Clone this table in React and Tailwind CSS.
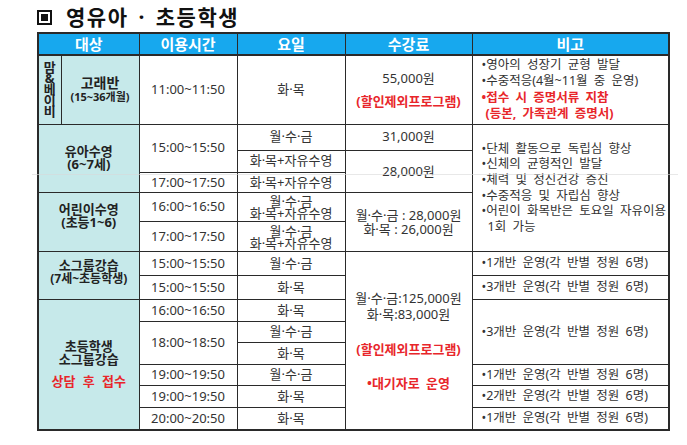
const Td = ({ children, className = "", ...rest }) => (
  <td
    className={`border border-[#2a2a2a] p-0 text-center align-middle ${className}`}
    {...rest}
  >
    {children}
  </td>
);

const Th = ({ children, ...rest }) => (
  <th
    className="border border-[#2a2a2a] border-b-2 bg-[#17a8ee] p-0 text-center align-middle text-[15px] font-bold leading-none text-white"
    {...rest}
  >
    {children}
  </th>
);

const cyan = "bg-[#c6e9ea] font-bold text-[#222] text-[13px] leading-[13px]";
const note = "text-left pl-[9px] text-[12.5px] text-[#333] [word-spacing:3px]";

const Red = ({ children, className = "" }) => (
  <span className={`font-bold text-[#e8262b] ${className}`}>{children}</span>
);

export default function App() {
  return (
    <div className="relative h-[445px] w-[687px] overflow-hidden bg-white font-['Noto_Sans','Noto_Sans_CJK_KR',sans-serif] text-[13px] text-[#333]">
      <div className="flex h-[32px] items-center gap-[14px] pl-[37px] pt-[3px]">
        <span className="flex h-[15px] w-[15px] items-center justify-center border-2 border-[#111]">
          <span className="h-[7px] w-[7px] bg-[#111]" />
        </span>
        <h1 className="text-[21px] font-bold leading-none tracking-[1.5px] text-[#111] [word-spacing:3px]">
          영유아 · 초등학생
        </h1>
      </div>

      <table className="ml-[37px] w-[631px] table-fixed border-collapse border-2 border-[#2a2a2a]">
        <colgroup>
          <col className="w-[23px]" />
          <col className="w-[78px]" />
          <col className="w-[98px]" />
          <col className="w-[108px]" />
          <col className="w-[127px]" />
          <col className="w-[197px]" />
        </colgroup>
        <thead>
          <tr className="h-[22px]">
            <Th colSpan={2}>대상</Th>
            <Th>이용시간</Th>
            <Th>요일</Th>
            <Th>수강료</Th>
            <Th>비고</Th>
          </tr>
        </thead>
        <tbody>
          <tr className="h-[69px]">
            <Td className={`${cyan} text-[10px]`}>
              <div className="flex flex-col items-center leading-[11px]">
                <span className="h-[11px]">맘</span>
                <span className="h-[11px]">&amp;</span>
                <span className="h-[11px]">베</span>
                <span className="h-[11px]">이</span>
                <span className="h-[11px]">비</span>
              </div>
            </Td>
            <Td className={cyan}>
              <div className="text-[14px] leading-[14px]">고래반</div>
              <div className="text-[11px] leading-[13px]">(15~36개월)</div>
            </Td>
            <Td>11:00~11:50</Td>
            <Td>화·목</Td>
            <Td>
              <div className="leading-[16px]">55,000원</div>
              <div className="mt-[7px] leading-[16px]">
                <Red>(할인제외프로그램)</Red>
              </div>
            </Td>
            <Td className={`${note} leading-[16.5px]`}>
              <div>•영아의 성장기 균형 발달</div>
              <div>•수중적응(4월~11월 중 운영)</div>
              <div>
                <Red>•접수 시 증명서류 지참</Red>
              </div>
              <div className="pl-[4px]">
                <Red>(등본, 가족관계 증명서)</Red>
              </div>
            </Td>
          </tr>

          <tr className="h-[26px]">
            <Td colSpan={2} rowSpan={3} className={cyan}>
              <div>유아수영</div>
              <div>(6~7세)</div>
            </Td>
            <Td rowSpan={2}>15:00~15:50</Td>
            <Td>월·수·금</Td>
            <Td>31,000원</Td>
            <Td rowSpan={5} className={`${note} leading-[15.7px]`}>
              <div>•단체 활동으로 독립심 향상</div>
              <div>•신체의 균형적인 발달</div>
              <div>•체력 및 정신건강 증진</div>
              <div>•수중적응 및 자립심 향상</div>
              <div>•어린이 화목반은 토요일 자유이용</div>
              <div className="pl-[6px]">1회 가능</div>
            </Td>
          </tr>
          <tr className="h-[22px]">
            <Td>화·목+자유수영</Td>
            <Td rowSpan={2}>28,000원</Td>
          </tr>
          <tr className="h-[20px]">
            <Td>17:00~17:50</Td>
            <Td>화·목+자유수영</Td>
          </tr>

          <tr className="h-[29px]">
            <Td colSpan={2} rowSpan={2} className={cyan}>
              <div className="pb-[12px]">
                <div>어린이수영</div>
                <div>(초등1~6)</div>
              </div>
            </Td>
            <Td>16:00~16:50</Td>
            <Td className="leading-[12px]">
              <div>월·수·금</div>
              <div>화·목+자유수영</div>
            </Td>
            <Td rowSpan={2} className="leading-[14px]">
              <div>월·수·금 : 28,000원</div>
              <div>화·목 : 26,000원</div>
            </Td>
          </tr>
          <tr className="h-[30px]">
            <Td>17:00~17:50</Td>
            <Td className="leading-[12px]">
              <div>월·수·금</div>
              <div>화·목+자유수영</div>
            </Td>
          </tr>

          <tr className="h-[24px]">
            <Td colSpan={2} rowSpan={2} className={cyan}>
              <div className="pb-[8px]">
                <div>소그룹강습</div>
                <div className="text-[12px]">(7세~초등학생)</div>
              </div>
            </Td>
            <Td>15:00~15:50</Td>
            <Td>월·수·금</Td>
            <Td rowSpan={8}>
              <div className="leading-[16px]">월·수·금:125,000원</div>
              <div className="leading-[16px]">화·목:83,000원</div>
              <div className="mt-[19px] leading-[16px]">
                <Red>(할인제외프로그램)</Red>
              </div>
              <div className="mt-[18px] leading-[16px]">
                <Red className="[word-spacing:3px]">•대기자로 운영</Red>
              </div>
            </Td>
            <Td className={note}>•1개반 운영(각 반별 정원 6명)</Td>
          </tr>
          <tr className="h-[24px]">
            <Td>15:00~15:50</Td>
            <Td>화·목</Td>
            <Td className={note}>•3개반 운영(각 반별 정원 6명)</Td>
          </tr>

          <tr className="h-[22px]">
            <Td colSpan={2} rowSpan={6} className={cyan}>
              <div>초등학생</div>
              <div>소그룹강습</div>
              <div className="mt-[9px]">
                <Red className="[word-spacing:4px]">상담 후 접수</Red>
              </div>
            </Td>
            <Td>16:00~16:50</Td>
            <Td>화·목</Td>
            <Td rowSpan={3} className={note}>
              •3개반 운영(각 반별 정원 6명)
            </Td>
          </tr>
          <tr className="h-[21px]">
            <Td rowSpan={2}>18:00~18:50</Td>
            <Td>월·수·금</Td>
          </tr>
          <tr className="h-[22px]">
            <Td>화·목</Td>
          </tr>
          <tr className="h-[21px]">
            <Td>19:00~19:50</Td>
            <Td>월·수·금</Td>
            <Td className={note}>•1개반 운영(각 반별 정원 6명)</Td>
          </tr>
          <tr className="h-[22px]">
            <Td>19:00~19:50</Td>
            <Td>화·목</Td>
            <Td className={note}>•2개반 운영(각 반별 정원 6명)</Td>
          </tr>
          <tr className="h-[22px]">
            <Td>20:00~20:50</Td>
            <Td>화·목</Td>
            <Td className={note}>•1개반 운영(각 반별 정원 6명)</Td>
          </tr>
        </tbody>
      </table>

      <div className="pointer-events-none absolute left-[32px] top-[174px] h-px w-[646px] bg-[#d8d8d8] opacity-60" />
    </div>
  );
}
